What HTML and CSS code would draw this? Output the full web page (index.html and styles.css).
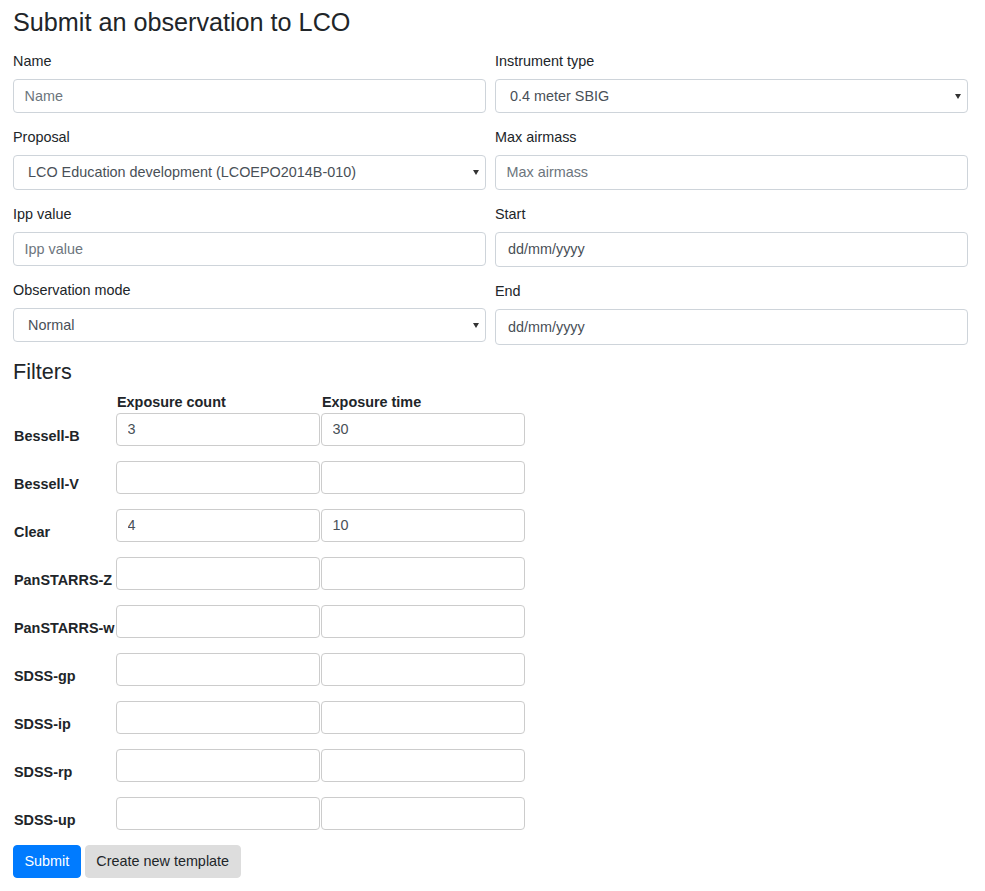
FILE: index.html
```html
<!DOCTYPE html>
<html lang="en">
<head>
    <meta charset="UTF-8">
    <meta name="viewport" content="width=device-width, initial-scale=1.0">
    <title>Submit an observation</title>
    <link rel="stylesheet" href="styles.css">
</head>
<body>
    <div class="page">
        <h3 class="title">Submit an observation to LCO</h3>
        <form id="observationForm">
            <div class="columns">
                <div class="col">
                    <div class="form-group">
                        <label for="name">Name</label>
                        <input type="text" id="name" class="form-control" placeholder="Name">
                    </div>
                    <div class="form-group">
                        <label for="proposal">Proposal</label>
                        <div class="select-wrap">
                            <select id="proposal" class="form-control">
                                <option>LCO Education development (LCOEPO2014B-010)</option>
                            </select>
                        </div>
                    </div>
                    <div class="form-group">
                        <label for="ipp">Ipp value</label>
                        <input type="text" id="ipp" class="form-control" placeholder="Ipp value">
                    </div>
                    <div class="form-group">
                        <label for="mode">Observation mode</label>
                        <div class="select-wrap">
                            <select id="mode" class="form-control">
                                <option>Normal</option>
                            </select>
                        </div>
                    </div>
                </div>
                <div class="col">
                    <div class="form-group">
                        <label for="instrument">Instrument type</label>
                        <div class="select-wrap">
                            <select id="instrument" class="form-control">
                                <option>0.4 meter SBIG</option>
                            </select>
                        </div>
                    </div>
                    <div class="form-group">
                        <label for="airmass">Max airmass</label>
                        <input type="text" id="airmass" class="form-control" placeholder="Max airmass">
                    </div>
                    <div class="form-group">
                        <label for="start">Start</label>
                        <input type="text" id="start" class="form-control date" value="dd/mm/yyyy">
                    </div>
                    <div class="form-group">
                        <label for="end">End</label>
                        <input type="text" id="end" class="form-control date" value="dd/mm/yyyy">
                    </div>
                </div>
            </div>

            <h4 class="section-title">Filters</h4>
            <div class="filters">
                <div class="filter-head">
                    <span></span>
                    <span>Exposure count</span>
                    <span>Exposure time</span>
                </div>
                <div class="filter-row">
                    <span class="filter-name">Bessell-B</span>
                    <input type="text" class="form-control" value="3">
                    <input type="text" class="form-control" value="30">
                </div>
                <div class="filter-row">
                    <span class="filter-name">Bessell-V</span>
                    <input type="text" class="form-control">
                    <input type="text" class="form-control">
                </div>
                <div class="filter-row">
                    <span class="filter-name">Clear</span>
                    <input type="text" class="form-control" value="4">
                    <input type="text" class="form-control" value="10">
                </div>
                <div class="filter-row">
                    <span class="filter-name">PanSTARRS-Z</span>
                    <input type="text" class="form-control">
                    <input type="text" class="form-control">
                </div>
                <div class="filter-row">
                    <span class="filter-name">PanSTARRS-w</span>
                    <input type="text" class="form-control">
                    <input type="text" class="form-control">
                </div>
                <div class="filter-row">
                    <span class="filter-name">SDSS-gp</span>
                    <input type="text" class="form-control">
                    <input type="text" class="form-control">
                </div>
                <div class="filter-row">
                    <span class="filter-name">SDSS-ip</span>
                    <input type="text" class="form-control">
                    <input type="text" class="form-control">
                </div>
                <div class="filter-row">
                    <span class="filter-name">SDSS-rp</span>
                    <input type="text" class="form-control">
                    <input type="text" class="form-control">
                </div>
                <div class="filter-row">
                    <span class="filter-name">SDSS-up</span>
                    <input type="text" class="form-control">
                    <input type="text" class="form-control">
                </div>
            </div>

            <div class="actions">
                <button type="submit" class="btn btn-primary">Submit</button>
                <button type="button" class="btn btn-secondary">Create new template</button>
            </div>
        </form>
    </div>
</body>
</html>
```

FILE: styles.css
```css
* {
    box-sizing: border-box;
}

body {
    font-family: "Liberation Sans", Arial, sans-serif;
    font-size: 14.4px;
    line-height: 21px;
    color: #212529;
    background-color: #fff;
    margin: 0;
    padding: 0;
}

.page {
    padding: 7px 17px 0 13px;
}

.title {
    font-size: 25.2px;
    font-weight: 400;
    line-height: 30px;
    margin: 0 0 14px;
}

.columns {
    display: grid;
    grid-template-columns: 1fr 1fr;
    column-gap: 9px;
}

.form-group {
    margin-bottom: 14px;
}

label {
    display: block;
    margin-bottom: 7px;
}

.form-control {
    display: block;
    width: 100%;
    height: 34.3px;
    padding: 5px 10.5px;
    font-family: inherit;
    font-size: 14.4px;
    line-height: 21px;
    color: #495057;
    background-color: #fff;
    border: 1px solid #ced4da;
    border-radius: 4px;
    margin: 0;
}

.form-control::placeholder {
    color: #6c757d;
}

.form-control.date {
    height: 35.5px;
    padding-left: 12px;
}

/* selects drop the native arrow, a small triangle is drawn instead */
.select-wrap {
    position: relative;
}

.select-wrap select {
    appearance: none;
    -webkit-appearance: none;
    padding-left: 14px;
}

.select-wrap::after {
    content: "";
    position: absolute;
    right: 7px;
    top: 15px;
    border-left: 3px solid transparent;
    border-right: 3px solid transparent;
    border-top: 5px solid #333;
    pointer-events: none;
}

.section-title {
    font-size: 21.6px;
    font-weight: 400;
    line-height: 26px;
    margin: 0 0 7px;
}

.filter-head,
.filter-row {
    display: grid;
    grid-template-columns: 102px 204px 204px;
    column-gap: 1px;
}

.filter-head {
    height: 21px;
    font-weight: 700;
}

.filter-head span {
    padding-left: 1px;
}

.filter-row {
    height: 48px;
}

.filter-name {
    align-self: center;
    font-weight: 700;
    white-space: nowrap;
    padding-left: 1px;
}

.filter-row .form-control {
    align-self: start;
    height: 33.5px;
    border-color: #ccc;
}

.actions {
    display: flex;
    gap: 4px;
}

.btn {
    font-family: inherit;
    font-size: 14.4px;
    line-height: 21px;
    padding: 5px 10.5px;
    height: 33px;
    border: 1px solid transparent;
    border-radius: 4px;
    cursor: pointer;
}

.btn-primary {
    background-color: #007bff;
    border-color: #007bff;
    color: #fff;
}

.btn-secondary {
    background-color: #ddd;
    border-color: #ddd;
    color: #212529;
}
```
